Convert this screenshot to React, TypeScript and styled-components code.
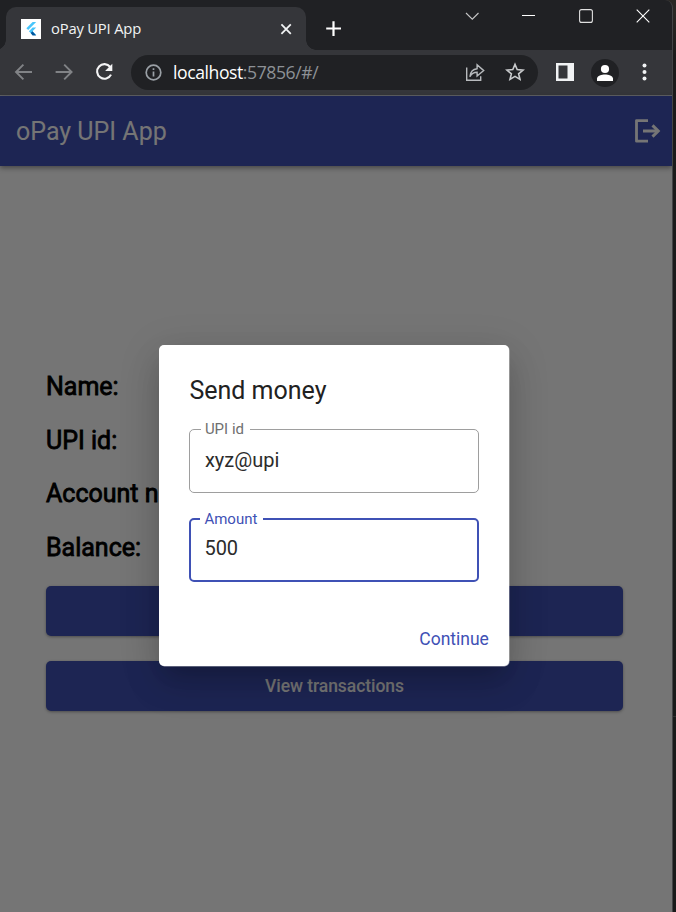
import React from "react";
import styled, { createGlobalStyle } from "styled-components";

const Global = createGlobalStyle`
  * { box-sizing: border-box; }
  html, body { margin: 0; padding: 0; background: #191a1a; }
`;

const Desktop = styled.div`
  width: 676px;
  height: 912px;
  overflow: hidden;
  background: linear-gradient(#2a2825 0 14px, #1c1b1b 57px, #191a1a 716px, #303030 716px 717px, #191a1a 717px);
`;

const Window = styled.div`
  width: 673px;
  height: 912px;
  display: flex;
  flex-direction: column;
  background: #202124;
  border-right: 1px solid #434446;
  border-top-right-radius: 8px;
  overflow: hidden;
`;

const TabStrip = styled.header`
  height: 50px;
  flex: none;
  display: flex;
  padding: 7px 0 0 6px;
`;

const Tab = styled.div`
  position: relative;
  width: 300px;
  height: 43px;
  display: flex;
  align-items: center;
  padding: 0 14px 0 15px;
  border-radius: 10px 10px 0 0;
  background: #35363a;
  &::before, &::after {
    content: "";
    position: absolute;
    bottom: 0;
    width: 10px;
    height: 10px;
  }
  &::before {
    left: -10px;
    background: radial-gradient(circle at 0 0, transparent 9.5px, #35363a 10px);
  }
  &::after {
    right: -10px;
    background: radial-gradient(circle at 100% 0, transparent 9.5px, #35363a 10px);
  }
`;

const Favicon = styled.span`
  width: 20px;
  height: 20px;
  background: #fff;
  display: flex;
`;

const TabTitle = styled.span`
  flex: 1;
  margin: -2px 0 0 10px;
  font: 14.8px/20px "Open Sans", "Noto Sans", sans-serif;
  letter-spacing: -0.2px;
  color: #f1f3f4;
`;

const Icon = styled.svg`
  display: block;
  flex: none;
  fill: none;
`;

const NewTab = styled.div`
  padding: 14px 0 0 20px;
`;

const WindowControls = styled.div`
  margin: 1px 22px 0 auto;
  height: 16px;
  display: flex;
  align-items: center;
  gap: 43.5px;
`;

const Toolbar = styled.nav`
  height: 46px;
  flex: none;
  display: flex;
  align-items: center;
  padding: 0 15px 1px 14px;
  background: #35363a;
  border-bottom: 1px solid #606164;
`;

const NavButtons = styled.div`
  display: flex;
  gap: 20px;
`;

const AddressBar = styled.div`
  width: 407px;
  height: 35px;
  margin: 0 18px 0 17px;
  display: flex;
  align-items: center;
  padding: 0 13px;
  border-radius: 18px;
  background: #202124;
`;

const Url = styled.span`
  flex: 1;
  margin: 0 0 0 10px;
  font: 17.6px/24px "Open Sans", "Noto Sans", sans-serif;
  letter-spacing: -0.43px;
  color: #8d9196;
  b { font-weight: 400; color: #fff; }
`;

const AddressActions = styled.div`
  display: flex;
  gap: 20px;
`;

const Avatar = styled.span`
  width: 28px;
  height: 28px;
  margin: 1px auto 0 17px;
  border-radius: 50%;
  background: #202124;
  display: grid;
  place-items: center;
`;

const MenuDots = styled.span`
  padding-right: 10px;
`;

const Viewport = styled.div`
  position: relative;
  flex: 1;
  background: #fefefe;
  font-family: Roboto, sans-serif;
`;

const AppBar = styled.header`
  height: 70px;
  display: flex;
  align-items: center;
  justify-content: space-between;
  padding: 0 10px 0 16px;
  background: #3f51b5;
  box-shadow: 0 2px 5px rgba(0, 0, 0, 0.4);
`;

const AppTitle = styled.h1`
  margin: 2px 0 0;
  font: 400 25px/30px Roboto, sans-serif;
  color: #fff;
`;

const Account = styled.main`
  padding: 194px 49px 0 46px;
`;

const Detail = styled.p`
  margin: 0;
  height: 53.6px;
  font: 400 25px/53.6px Roboto, sans-serif;
  -webkit-text-stroke: 0.8px #000;
  color: #000;
`;

const Actions = styled.div`
  display: flex;
  flex-direction: column;
  gap: 25px;
  margin-top: 11.6px;
`;

const RaisedButton = styled.div`
  height: 50px;
  border-radius: 5px;
  background: #3f51b5;
  color: #fff;
  font: 500 17.5px/50px Roboto, sans-serif;
  letter-spacing: -0.05px;
  text-align: center;
  box-shadow: 0 1px 3px rgba(0, 0, 0, 0.35);
`;

const Scrim = styled.div`
  position: absolute;
  inset: 0;
  background: rgba(0, 0, 0, 0.54);
`;

const Dialog = styled.section`
  position: absolute;
  left: 159.4px;
  top: 249.4px;
  width: 350px;
  height: 321px;
  padding: 31px 30px 0;
  border-radius: 5px;
  background: #fff;
  box-shadow: 0.5px 0.5px 0 rgba(255, 255, 255, 0.6), 0 14px 19px -9px rgba(0, 0, 0, 0.14),
    0 20px 36px 2px rgba(0, 0, 0, 0.1), 0 8px 40px 4px rgba(0, 0, 0, 0.1);
`;

const DialogTitle = styled.h2`
  margin: 0;
  font: 400 25px/30px Roboto, sans-serif;
  color: #212121;
`;

const Field = styled.fieldset<{ $focused?: boolean }>`
  width: 290px;
  height: 72px;
  margin: ${(p) => (p.$focused ? 17 : 15)}px 0 0;
  padding: 0 0 0 ${(p) => (p.$focused ? 13 : 14.5)}px;
  min-width: 0;
  border: ${(p) => (p.$focused ? "2.5px solid #3f51b5" : "1px solid #9e9e9e")};
  border-radius: 5px;
`;

const FieldLabel = styled.legend`
  margin-left: -4px;
  padding: 0 6px 0 4px;
  font: 400 15px/17px Roboto, sans-serif;
  color: #6f6f6f;
`;

const FocusedLabel = styled(FieldLabel)`
  padding-top: 1px;
  color: #3f51b5;
`;

const FieldValue = styled.div<{ $focused?: boolean }>`
  padding-top: ${(p) => (p.$focused ? 8 : 10)}px;
  font: 400 20px/24px Roboto, sans-serif;
  color: #2b2b2b;
`;

const DialogActions = styled.div`
  display: flex;
  justify-content: flex-end;
  margin: 46px -9.5px 0 0;
`;

const TextButton = styled.span`
  font: 400 17.5px/22px Roboto, sans-serif;
  color: #3f51b5;
`;

export default function App() {
  return (
    <Desktop>
      <Global />
      <Window>
        <TabStrip>
          <Tab>
            <Favicon>
              <Icon width="20" height="20" viewBox="0 0 20 20">
                <path d="M11.6 3h3.6L7.2 11 5.4 9.2z" fill="#47c5fb" />
                <path d="M11.6 8.6h3.6l-3.7 3.7 3.7 3.7h-3.6l-3.7-3.7z" fill="#47c5fb" />
                <path d="m9.7 14.1 1.8-1.8 3.7 4.3h-3.6z" fill="#00569e" />
              </Icon>
            </Favicon>
            <TabTitle>oPay UPI App</TabTitle>
            <Icon width="12" height="12" stroke="#f1f3f4" strokeWidth="1.8">
              <path d="m1.4 1.4 9.4 9.4m0-9.4-9.4 9.4" />
            </Icon>
          </Tab>
          <NewTab>
            <Icon width="16" height="16" stroke="#fff" strokeWidth="2.2">
              <path d="M.2 7.5H15M7.5.2V15" />
            </Icon>
          </NewTab>
          <WindowControls>
            <Icon width="14" height="10" stroke="#c6c6c7" strokeWidth="1.1">
              <path d="m1 2 6.3 6.2L13.5 2" />
            </Icon>
            <Icon width="13" height="14" stroke="#fff">
              <path d="M0 6.5h13" />
            </Icon>
            <Icon width="14" height="14" stroke="#e0e0e0" strokeWidth="1.1">
              <rect x=".6" y=".6" width="12.8" height="12.8" rx="2" />
            </Icon>
            <Icon width="14" height="14" stroke="#fff" strokeWidth="1.1">
              <path d="m.7.7 12.6 12.6m0-12.6L.7 13.3" />
            </Icon>
          </WindowControls>
        </TabStrip>
        <Toolbar>
          <NavButtons>
            <Icon width="20" height="20" stroke="#818386" strokeWidth="1.9">
              <path d="M18 10H2.4M9.4 2.6 2 10l7.4 7.4" />
            </Icon>
            <Icon width="20" height="20" stroke="#818386" strokeWidth="1.9">
              <path d="M1.6 10h15.6M10.2 2.6l7.4 7.4-7.4 7.4" />
            </Icon>
            <Icon width="20" height="20" stroke="#f4f4f5" strokeWidth="2.1">
              <path d="M16.2 5A7.3 7.3 0 1 0 17 12.6" />
              <path d="M18.3 1.8V9h-7.2z" fill="#f4f4f5" stroke="none" />
            </Icon>
          </NavButtons>
          <AddressBar>
            <Icon width="19" height="19" stroke="#9aa0a6" strokeWidth="1.7">
              <circle cx="9.5" cy="9.5" r="7.3" />
              <path d="M9.5 8.4v5M9.5 5.2v1.8" />
            </Icon>
            <Url>
              <b>localhost</b>:57856/#/
            </Url>
            <AddressActions>
              <Icon width="20" height="20" stroke="#b8bbbe" strokeWidth="1.4">
                <path d="M1.7 5.5v12.8h14v-4.1" />
                <path d="M4.9 14.7c.5-5 2.5-7.6 7.2-8V2.8l6.6 5.8-6.6 5.5v-3.9c-3.4 0-5.6 1.2-7.2 4.5z" />
              </Icon>
              <Icon width="20" height="20" stroke="#c8cacc" strokeWidth="1.6">
                <path d="m10 2.4 2.2 5.2 5.8.5-4.4 3.7 1.4 5.6-5-3-5 3 1.4-5.6L2 8.1l5.8-.5z" />
              </Icon>
            </AddressActions>
          </AddressBar>
          <Icon width="18" height="18">
            <path d="M0 0h18v18H0zM2.5 2.5v13h9v-13z" fill="#f1f3f4" fillRule="evenodd" />
          </Icon>
          <Avatar>
            <Icon width="18" height="18">
              <g fill="#fff">
                <circle cx="9" cy="5" r="4.1" />
                <path d="M1 17v-2.4c0-3 4.8-4.2 8-4.2s8 1.2 8 4.2V17z" />
              </g>
            </Icon>
          </Avatar>
          <MenuDots>
            <Icon width="5" height="18">
              <g fill="#f1f3f4">
                <circle cx="2.5" cy="2.5" r="2" />
                <circle cx="2.5" cy="9" r="2" />
                <circle cx="2.5" cy="15.5" r="2" />
              </g>
            </Icon>
          </MenuDots>
        </Toolbar>
        <Viewport>
          <AppBar>
            <AppTitle>oPay UPI App</AppTitle>
            <Icon width="30" height="30" stroke="#fff" strokeWidth="2.8" strokeLinejoin="round">
              <path d="M16 4.6H4.5v20.6H16" />
              <path d="M11 15h15" strokeWidth="3" />
              <path d="m20.5 9.4 5.7 5.6-5.7 5.6" strokeWidth="3" strokeLinejoin="miter" />
            </Icon>
          </AppBar>
          <Account>
            <Detail>Name:</Detail>
            <Detail>UPI id:</Detail>
            <Detail>Account n</Detail>
            <Detail>Balance:</Detail>
            <Actions>
              <RaisedButton />
              <RaisedButton>View transactions</RaisedButton>
            </Actions>
          </Account>
          <Scrim />
          <Dialog>
            <DialogTitle>Send money</DialogTitle>
            <Field>
              <FieldLabel>UPI id</FieldLabel>
              <FieldValue>xyz@upi</FieldValue>
            </Field>
            <Field $focused>
              <FocusedLabel>Amount</FocusedLabel>
              <FieldValue $focused>500</FieldValue>
            </Field>
            <DialogActions>
              <TextButton>Continue</TextButton>
            </DialogActions>
          </Dialog>
        </Viewport>
      </Window>
    </Desktop>
  );
}
